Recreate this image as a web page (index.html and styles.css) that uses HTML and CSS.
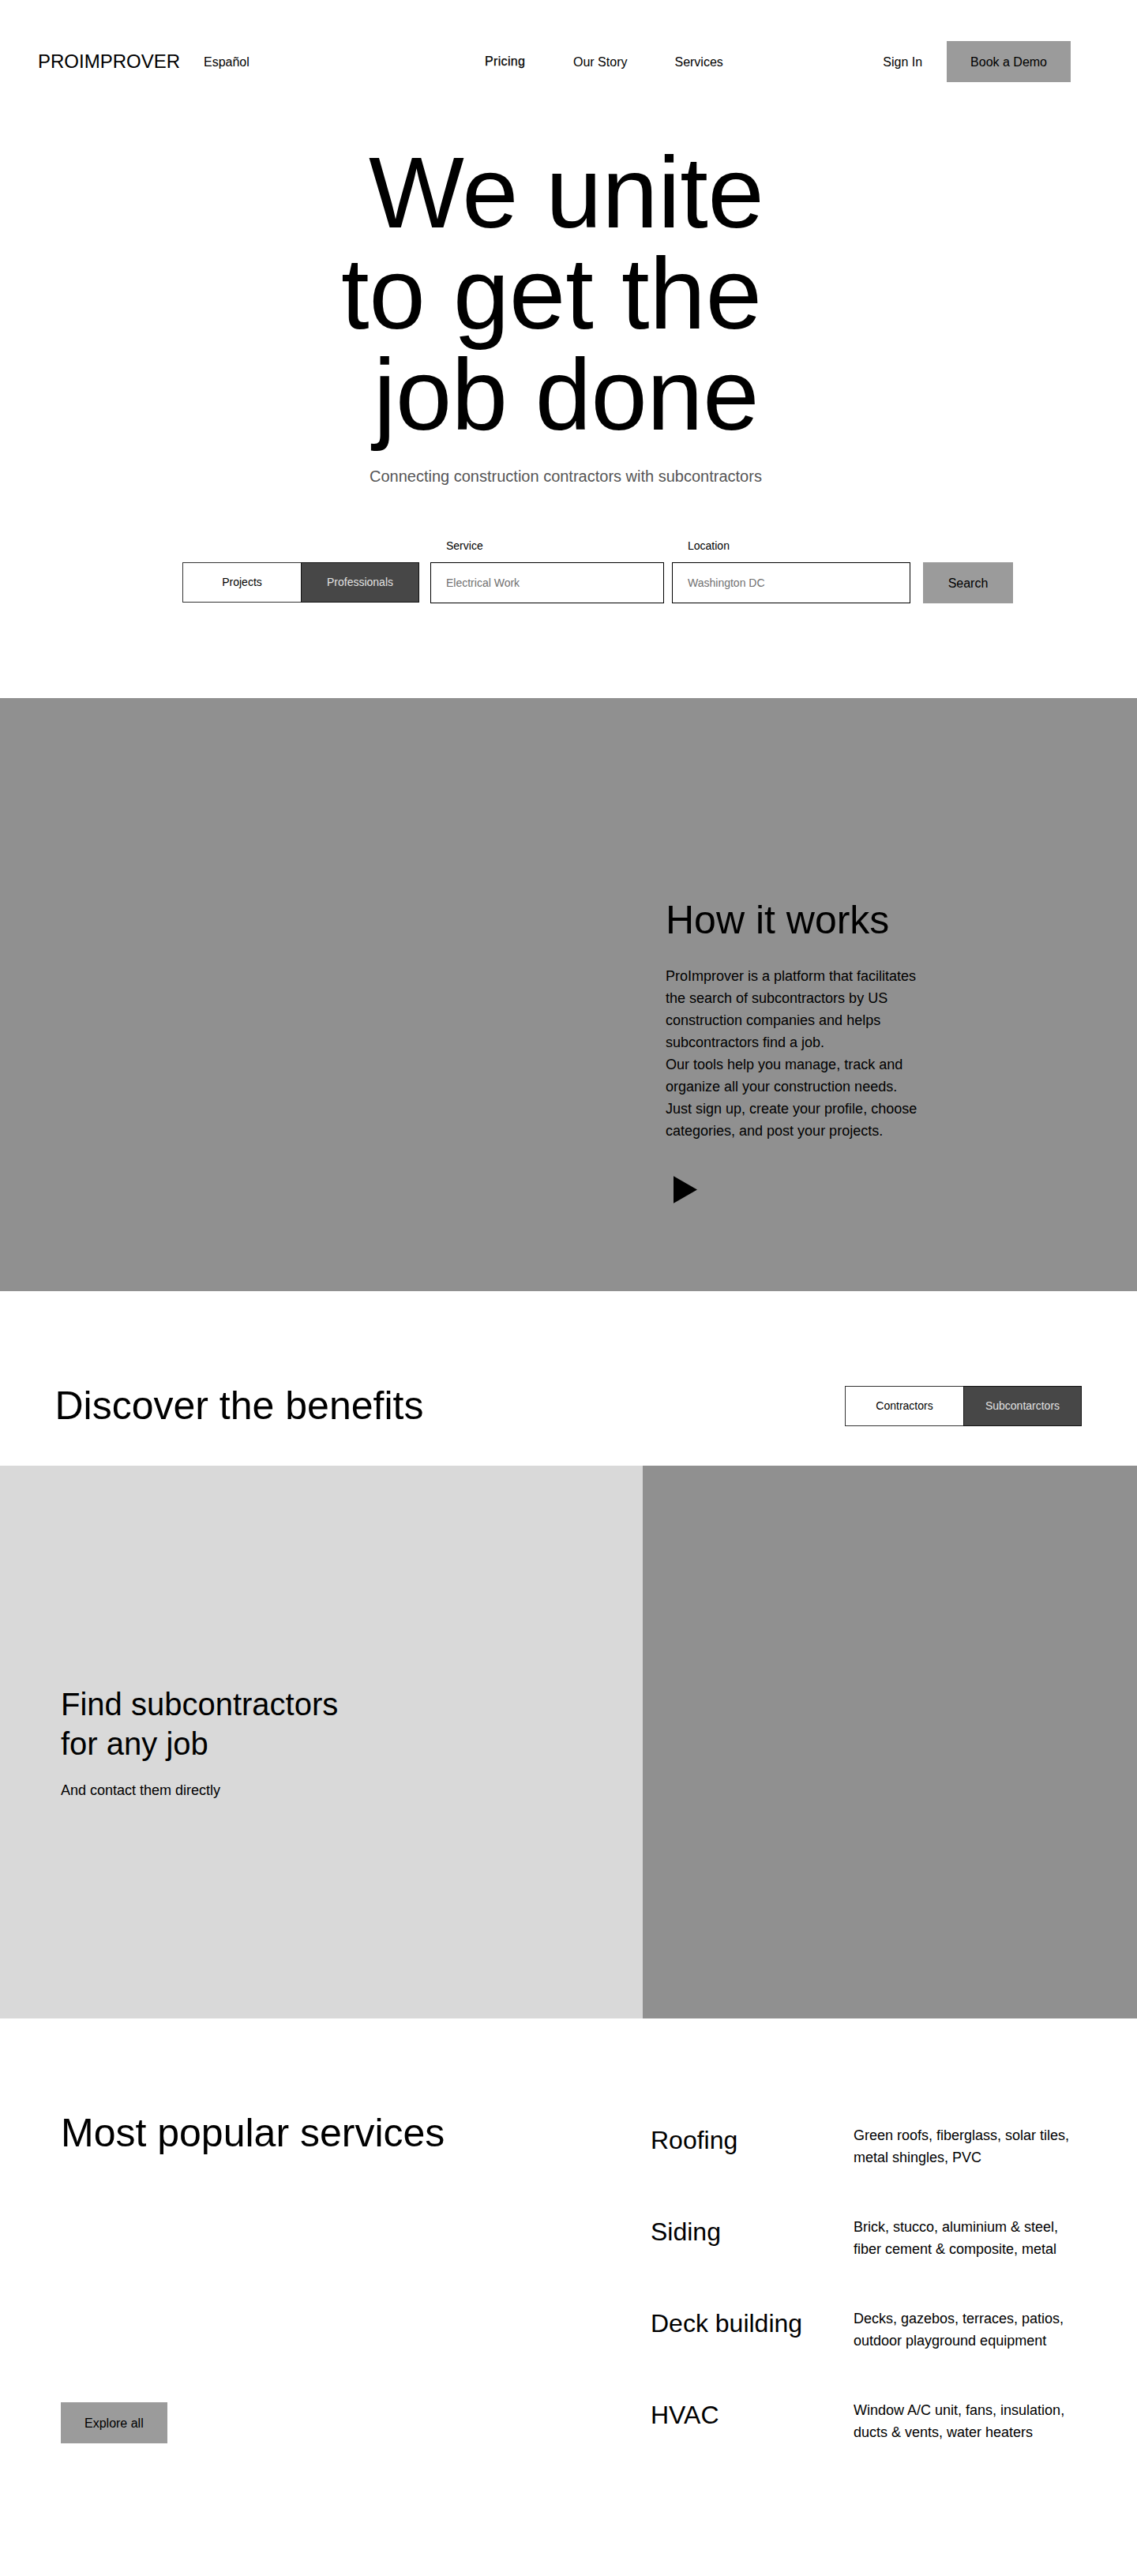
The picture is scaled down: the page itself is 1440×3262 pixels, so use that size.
FILE: index.html
```html
<!DOCTYPE html>
<html lang="en">
<head>
<meta charset="utf-8">
<title>ProImprover</title>
<link rel="stylesheet" href="styles.css">
</head>
<body>
<header class="header">
  <a class="logo">PROIMPROVER</a>
  <a class="lang">Español</a>
  <nav class="nav">
    <a class="nav-link active">Pricing</a>
    <a class="nav-link">Our Story</a>
    <a class="nav-link">Services</a>
  </nav>
  <a class="sign-in">Sign In</a>
  <a class="button">Book a Demo</a>
</header>
<main>
  <section class="hero">
    <h1 class="hero-title">
      <span class="line line-one">We unite</span>
      <span class="line line-two">to get the</span>
      <span class="line line-three">job done</span>
    </h1>
    <p class="hero-text">Connecting construction contractors with subcontractors</p>
    <form class="search">
      <div class="toggle search-toggle"><span class="option">Projects</span><span class="option selected">Professionals</span></div>
      <div class="field service"><label class="label">Service</label><div class="input">Electrical Work</div></div>
      <div class="field location"><label class="label">Location</label><div class="input">Washington DC</div></div>
      <div class="button search-button">Search</div>
    </form>
  </section>
  <section class="how">
    <h2 class="heading">How it works</h2>
    <p class="body-text how-text">ProImprover is a platform that facilitates<br>the search of subcontractors by US<br>construction companies and helps<br>subcontractors find a job.<br>Our tools help you manage, track and<br>organize all your construction needs.<br>Just sign up, create your profile, choose<br>categories, and post your projects.</p>
    <svg class="play" width="30" height="35" viewBox="0 0 30 35"><path d="M0 0.2L30 17.5L0 34.8Z"/></svg>
  </section>
  <section class="benefits-head">
    <h2 class="heading">Discover the benefits</h2>
    <div class="toggle"><span class="option">Contractors</span><span class="option selected">Subcontarctors</span></div>
  </section>
  <section class="benefits">
    <div class="benefit">
      <h3 class="benefit-title">Find subcontractors<br>for any job</h3>
      <p class="body-text">And contact them directly</p>
    </div>
    <div class="benefit-image"></div>
  </section>
  <section class="services">
    <div class="services-intro">
      <h2 class="heading">Most popular services</h2>
      <a class="button">Explore all</a>
    </div>
    <div class="service-list">
      <div class="service-row"><h3 class="service-name">Roofing</h3><p class="body-text">Green roofs, fiberglass, solar tiles,<br>metal shingles, PVC</p></div>
      <div class="service-row"><h3 class="service-name">Siding</h3><p class="body-text">Brick, stucco, aluminium &amp; steel,<br>fiber cement &amp; composite, metal</p></div>
      <div class="service-row"><h3 class="service-name">Deck building</h3><p class="body-text">Decks, gazebos, terraces, patios,<br>outdoor playground equipment</p></div>
      <div class="service-row"><h3 class="service-name">HVAC</h3><p class="body-text">Window A/C unit, fans, insulation,<br>ducts &amp; vents, water heaters</p></div>
    </div>
  </section>
</main>
</body>
</html>
```
FILE: styles.css
```css
* { box-sizing: border-box; }
body { margin: 0; background: #fff; color: #000; font-family: "Liberation Sans", Arial, Helvetica, sans-serif; font-size: 16px; }
h1, h2, h3, p { margin: 0; font-weight: 400; }

.header { display: flex; align-items: center; height: 104px; padding: 52px 84px 0 48px; white-space: nowrap; }
.logo { width: 180px; font-size: 24px; }
.lang { margin-left: 30px; width: 356px; padding-top: 2px; }
.nav { display: flex; flex: 1; gap: 60px; padding-top: 2px; }
.nav-link.active { width: 52px; margin-top: -1px; letter-spacing: 0.35px; -webkit-text-stroke: 0.25px #000; }
.sign-in { margin-right: 31px; padding-top: 2px; }
.button { display: inline-flex; align-items: center; height: 52px; padding: 2px 30px 0; background: #9b9b9b; }

.hero { padding-top: 76px; height: 780px; }
.hero-title { font-size: 128px; line-height: 128px; white-space: nowrap; }
.line { display: block; }
.line-one { margin-left: 467px; letter-spacing: -0.3px; }
.line-two { margin-left: 432px; letter-spacing: -0.1px; }
.line-three { margin-left: 473px; letter-spacing: -0.4px; }
.hero-text { margin: 24px 0 65px 468px; font-size: 20px; line-height: 30px; color: #555; }
.search { display: flex; align-items: flex-end; margin-left: 231px; font-size: 14px; }
.toggle { display: flex; width: 300px; height: 51px; font-size: 14px; }
.option { display: flex; align-items: center; justify-content: center; width: 150px; padding-bottom: 1px; border: 1px solid #333; border-right: 0; }
.option.selected { border: 1px solid #111; background: #474747; color: #e2e2e2; }
.search-toggle { margin-bottom: 1px; }
.field { display: flex; flex-direction: column; gap: 13px; }
.service { width: 296px; margin-left: 14px; }
.location { width: 302px; margin-left: 10px; }
.label { padding-left: 20px; line-height: 16px; }
.input { display: flex; align-items: center; height: 52px; padding-left: 19px; border: 1px solid #000; color: #707070; }
.search-button { width: 114px; margin-left: 16px; padding: 2px 0 0; justify-content: center; font-size: 16px; }

.how { height: 751px; padding: 251px 0 0 843px; background: #909090; }
.heading { font-size: 50px; line-height: 60px; white-space: nowrap; }
.body-text { font-size: 18px; line-height: 28px; white-space: nowrap; }
.how-text { margin-top: 27px; }
.play { display: block; margin: 43px 0 0 10px; }

.benefits-head { display: flex; justify-content: space-between; height: 221px; padding: 115px 70px 0 69.5px; }
.benefits-head .toggle { margin-top: 5px; }
.benefits { display: flex; height: 700px; }
.benefit { width: 814px; padding: 277px 0 0 77px; background: #d9d9d9; }
.benefit-title { margin-bottom: 20px; font-size: 40px; line-height: 50px; }
.benefit-image { flex: 1; background: #909090; }

.services { display: flex; height: 706px; padding: 115px 0 168px 77px; }
.services-intro { display: flex; flex-direction: column; justify-content: space-between; align-items: flex-start; width: 747px; }
.service-list { display: flex; flex-direction: column; gap: 60px; padding-top: 19px; }
.service-row { display: grid; grid-template-columns: 257px auto; height: 56px; }
.service-name { font-size: 32px; line-height: 40px; }
```
